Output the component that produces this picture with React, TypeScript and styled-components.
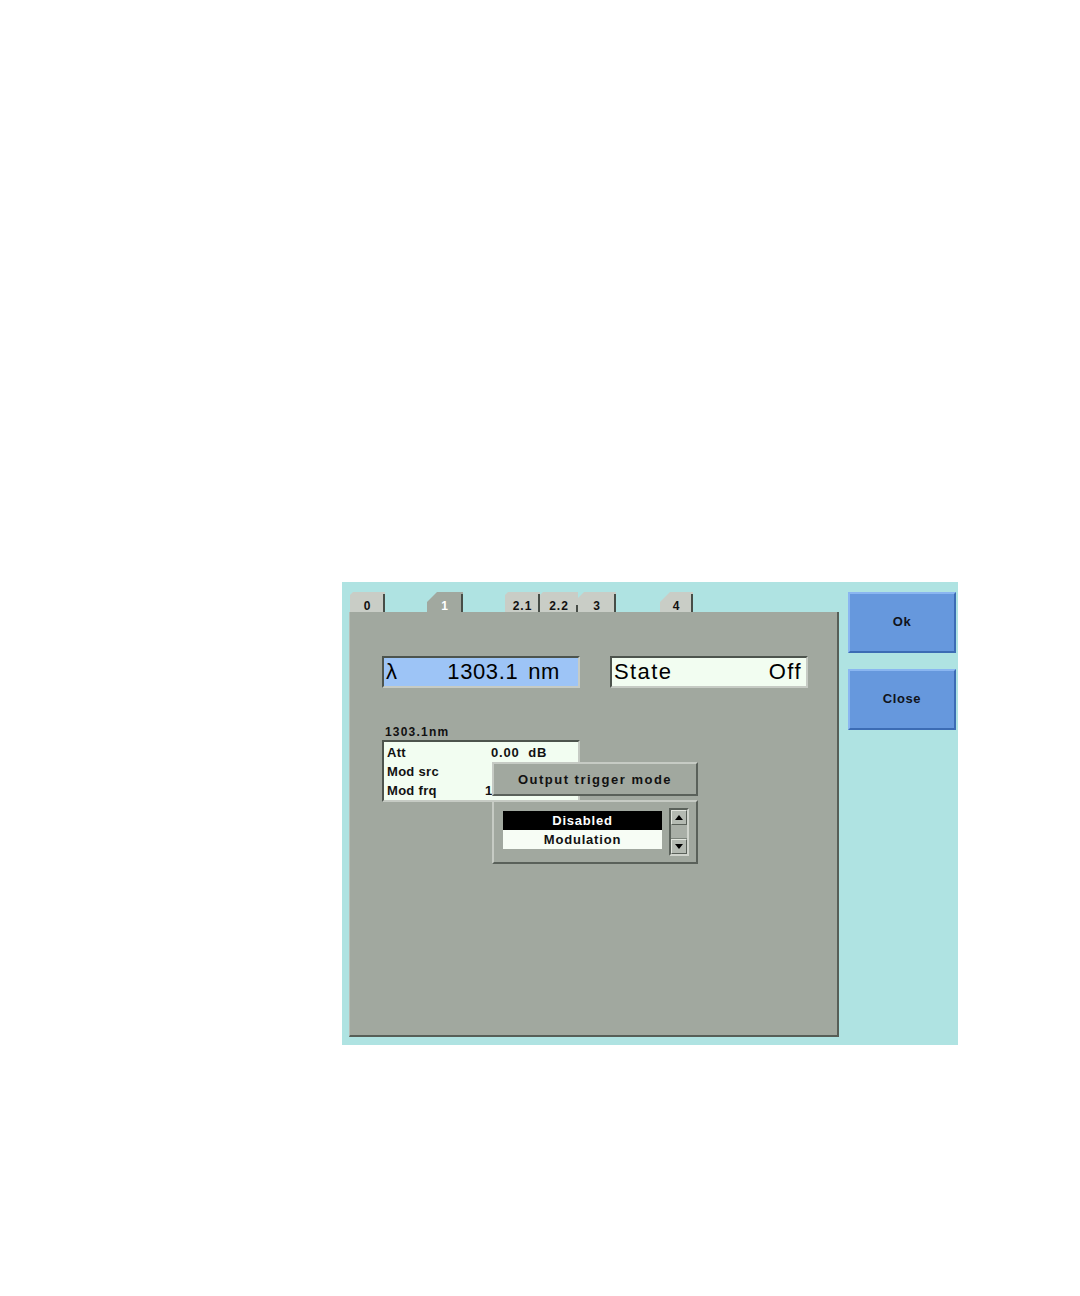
import styled, { createGlobalStyle } from "styled-components"

const GlobalStyle = createGlobalStyle`
    html, body {
        margin: 0;
        padding: 0;
        background: #ffffff;
    }
    body {
        font-family: "Liberation Sans", Arial, sans-serif;
    }
`;

const Page = styled.div`
    padding: 582px 0 0 342px;
    height: 1296px;
    box-sizing: border-box;
`;

const Screen = styled.div`
    width: 616px;
    height: 463px;
    background: #afe3e2;
    display: flex;
    flex-direction: row;
    box-sizing: border-box;
`;

const LeftColumn = styled.div`
    padding: 10px 0 0 7px;
    width: 497px;
    box-sizing: border-box;
    display: flex;
    flex-direction: column;
`;

const TabRow = styled.div`
    display: flex;
    flex-direction: row;
    height: 20px;
    align-items: flex-end;
`;

const Tab = styled.div<{ $offset: number; $width: number; $active?: boolean; $cut?: number; $edge?: "full" | "low" | "none" }>`
    margin-left: ${p => p.$offset}px;
    width: ${p => p.$width}px;
    height: 20px;
    box-sizing: border-box;
    background: ${p => (p.$active ? "#a1a89f" : "#c9cdc6")};
    color: ${p => (p.$active ? "#ffffff" : "#111111")};
    clip-path: polygon(${p => p.$cut ?? 3}px 0, 100% 0, 100% 100%, 0 100%, 0 ${p => p.$cut ?? 3}px);
    font-size: 12px;
    font-weight: 700;
    letter-spacing: 1px;
    display: flex;
    align-items: center;
    justify-content: center;
    padding-top: 8px;
    position: relative;
    &::after {
        content: "";
        position: absolute;
        right: 0;
        bottom: 0;
        width: 2px;
        height: ${p => (p.$edge === "low" ? "7px" : p.$edge === "none" ? "0" : "18px")};
        background: #474d47;
    }
`;

const Panel = styled.div`
    position: relative;
    height: 425px;
    width: 490px;
    box-sizing: border-box;
    background: #a1a89f;
    border-right: 2px solid #575e57;
    border-bottom: 2px solid #575e57;
    border-left: 1px solid #b8bdb6;
    padding: 44px 0 0 32px;
`;

const FieldRow = styled.div`
    display: flex;
    flex-direction: row;
    gap: 30px;
`;

const Field = styled.div<{ $tone: "blue" | "light" }>`
    width: 198px;
    height: 32px;
    box-sizing: border-box;
    background: ${p => (p.$tone === "blue" ? "#9dc4f6" : "#f2fdf1")};
    border-top: 2px solid #4d544d;
    border-left: 2px solid #4d544d;
    border-bottom: 2px solid #c6cbc4;
    border-right: 2px solid #c6cbc4;
    display: flex;
    align-items: center;
    justify-content: space-between;
    padding: 0 4px 0 2px;
    font-size: 22px;
    letter-spacing: 1.4px;
    color: #000;
`;

const FieldValue = styled.span`
    display: flex;
    gap: 10px;
    padding-right: 14px;
    letter-spacing: 0.6px;
`;

const Caption = styled.div`
    margin-top: 37px;
    margin-left: 3px;
    height: 15px;
    font-size: 12px;
    font-weight: 700;
    letter-spacing: 1.2px;
    color: #111;
`;

const Table = styled.div`
    width: 198px;
    height: 62px;
    box-sizing: border-box;
    background: #f2fdf1;
    border-top: 2px solid #4d544d;
    border-left: 2px solid #4d544d;
    border-bottom: 2px solid #c6cbc4;
    border-right: 2px solid #c6cbc4;
    padding: 1px 0 0 3px;
    display: flex;
    flex-direction: column;
`;

const TableRow = styled.div`
    display: grid;
    grid-template-columns: 104px 1fr;
    height: 19px;
    align-items: center;
    font-size: 13px;
    font-weight: 700;
    letter-spacing: 0.3px;
    color: #111;
`;

const TableValue = styled.span<{ $indent: number }>`
    margin-left: ${p => p.$indent}px;
    white-space: pre;
    letter-spacing: 0.8px;
`;

const Popup = styled.div`
    position: absolute;
    left: 142px;
    top: 150px;
    width: 206px;
    display: flex;
    flex-direction: column;
    gap: 4px;
`;

const PopupTitle = styled.div`
    height: 34px;
    box-sizing: border-box;
    background: #a1a89f;
    border-top: 2px solid #c6cbc4;
    border-left: 2px solid #c6cbc4;
    border-bottom: 2px solid #5a615a;
    border-right: 2px solid #5a615a;
    display: flex;
    align-items: center;
    justify-content: center;
    font-size: 13px;
    font-weight: 700;
    letter-spacing: 1.5px;
    color: #111;
`;

const PopupFrame = styled.div`
    height: 64px;
    box-sizing: border-box;
    background: #a1a89f;
    border-top: 2px solid #c6cbc4;
    border-left: 2px solid #c6cbc4;
    border-bottom: 2px solid #5a615a;
    border-right: 2px solid #5a615a;
    display: flex;
    flex-direction: row;
    align-items: flex-start;
    padding: 9px 0 0 9px;
    gap: 7px;
`;

const List = styled.div`
    width: 159px;
    display: flex;
    flex-direction: column;
`;

const ListItem = styled.div<{ $selected?: boolean }>`
    height: 19px;
    background: ${p => (p.$selected ? "#000000" : "#f7fdf5")};
    color: ${p => (p.$selected ? "#ffffff" : "#111111")};
    display: flex;
    align-items: center;
    justify-content: center;
    font-size: 13px;
    font-weight: 700;
    letter-spacing: 0.8px;
`;

const ScrollBar = styled.div`
    margin-top: -3px;
    width: 20px;
    height: 48px;
    box-sizing: border-box;
    border-top: 2px solid #5a615a;
    border-left: 2px solid #5a615a;
    border-bottom: 2px solid #d0d4cd;
    border-right: 2px solid #d0d4cd;
    display: flex;
    flex-direction: column;
`;

const ScrollButton = styled.div`
    height: 15px;
    box-sizing: border-box;
    background: #b4bab2;
    border-top: 1px solid #e2e6df;
    border-left: 1px solid #e2e6df;
    border-bottom: 1px solid #5a615a;
    border-right: 1px solid #5a615a;
    display: flex;
    align-items: center;
    justify-content: center;
`;

const ScrollTrack = styled.div`
    flex: 1;
    background: #a9afa7;
    border-bottom: 1px solid #7c837b;
`;

const RightColumn = styled.div`
    padding: 10px 0 0 9px;
    display: flex;
    flex-direction: column;
    gap: 16px;
`;

const SideButton = styled.button`
    width: 108px;
    height: 61px;
    box-sizing: border-box;
    background: #6698dd;
    border-top: 2px solid #8ab6f1;
    border-left: 2px solid #8ab6f1;
    border-bottom: 2px solid #3c6cb4;
    border-right: 2px solid #3c6cb4;
    font-family: "Liberation Sans", Arial, sans-serif;
    font-size: 13px;
    font-weight: 700;
    letter-spacing: 0.6px;
    color: #10131a;
    padding: 0 0 2px 0;
    cursor: pointer;
`;

function Arrow({ up }: { up?: boolean }) {
    return (
        <svg width="8" height="5" viewBox="0 0 8 5">
            <polygon points={up ? "4,0 8,5 0,5" : "0,0 8,0 4,5"} fill="#000" />
        </svg>
    )
}

const tabs = [
    { label: "0", offset: 1, width: 35, cut: 3 },
    { label: "1", offset: 42, width: 36, cut: 10, active: true },
    { label: "2.1", offset: 42, width: 35, cut: 3 },
    { label: "2.2", offset: 0, width: 38, cut: 3, edge: "low" as const },
    { label: "3", offset: 0, width: 38, cut: 6 },
    { label: "4", offset: 44, width: 33, cut: 10 },
];

export default function App() {
    return (
        <Page>
            <GlobalStyle />
            <Screen>
                <LeftColumn>
                    <TabRow>
                        {tabs.map(t => (
                            <Tab key={t.label} $offset={t.offset} $width={t.width} $active={t.active} $cut={t.cut} $edge={t.edge}>
                                {t.label}
                            </Tab>
                        ))}
                    </TabRow>
                    <Panel>
                        <FieldRow>
                            <Field $tone="blue">
                                <span>λ</span>
                                <FieldValue>
                                    <span>1303.1</span>
                                    <span>nm</span>
                                </FieldValue>
                            </Field>
                            <Field $tone="light">
                                <span>State</span>
                                <span>Off</span>
                            </Field>
                        </FieldRow>
                        <Caption>1303.1nm</Caption>
                        <Table>
                            <TableRow>
                                <span>Att</span>
                                <TableValue $indent={0}>0.00  dB</TableValue>
                            </TableRow>
                            <TableRow>
                                <span>Mod src</span>
                                <TableValue $indent={0}></TableValue>
                            </TableRow>
                            <TableRow>
                                <span>Mod frq</span>
                                <TableValue $indent={-6}>1</TableValue>
                            </TableRow>
                        </Table>
                        <Popup>
                            <PopupTitle>Output trigger mode</PopupTitle>
                            <PopupFrame>
                                <List>
                                    <ListItem $selected>Disabled</ListItem>
                                    <ListItem>Modulation</ListItem>
                                </List>
                                <ScrollBar>
                                    <ScrollButton><Arrow up /></ScrollButton>
                                    <ScrollTrack />
                                    <ScrollButton><Arrow /></ScrollButton>
                                </ScrollBar>
                            </PopupFrame>
                        </Popup>
                    </Panel>
                </LeftColumn>
                <RightColumn>
                    <SideButton>Ok</SideButton>
                    <SideButton>Close</SideButton>
                </RightColumn>
            </Screen>
        </Page>
    )
}
